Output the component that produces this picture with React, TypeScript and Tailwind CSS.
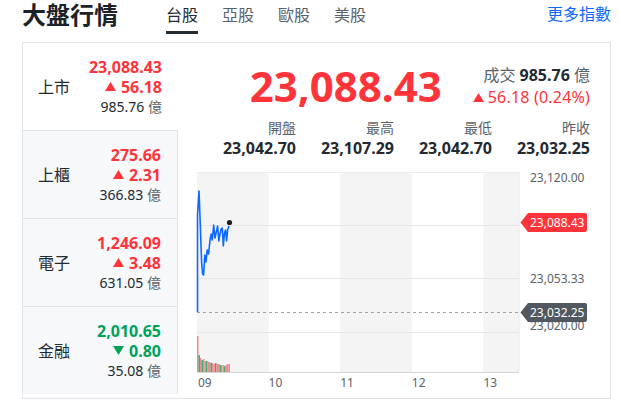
import React from "react";

const RED = "#ff333a";
const GREEN = "#00a25a";

function Tri({ up, color, size = 11 }: { up: boolean; color: string; size?: number }) {
  const h = Math.round(size * 0.82);
  return (
    <svg width={size} height={h} viewBox={`0 0 ${size} ${h}`} className="shrink-0">
      {up ? (
        <polygon points={`0,${h} ${size / 2},0 ${size},${h}`} fill={color} />
      ) : (
        <polygon points={`0,0 ${size},0 ${size / 2},${h}`} fill={color} />
      )}
    </svg>
  );
}

type Row = { name: string; price: string; change: string; vol: string; up: boolean };

const rows: Row[] = [
  { name: "上市", price: "23,088.43", change: "56.18", vol: "985.76", up: true },
  { name: "上櫃", price: "275.66", change: "2.31", vol: "366.83", up: true },
  { name: "電子", price: "1,246.09", change: "3.48", vol: "631.05", up: true },
  { name: "金融", price: "2,010.65", change: "0.80", vol: "35.08", up: false },
];

const linePts: [number, number][] = [
  [197.5, 312], [197.5, 215], [199, 191], [200.3, 225], [201.6, 262], [202.6, 274], [203.6, 275],
  [204.8, 255], [206, 262], [207.2, 250], [208.6, 254], [210, 240], [211.2, 234], [212.3, 240],
  [213.7, 225], [215, 238], [216.3, 232], [217.6, 226], [218.8, 241], [220, 234], [221.2, 229],
  [222.3, 228], [223.3, 246], [224.5, 233], [225.6, 230], [226.6, 241], [227.6, 230], [229, 226],
];

const bars: [number, number, boolean][] = [
  [197, 36, true], [198.5, 17, false], [200, 14, true], [201.5, 12, false], [203, 13, true],
  [204.5, 11, true], [206, 11, false], [207.5, 10, true], [209, 10, true], [210.5, 9, false],
  [212, 9, true], [213.5, 8, true], [215, 9, false], [216.5, 8, true], [218, 8, true],
  [219.5, 7, false], [221, 7, true], [222.5, 7, true], [224, 6, false], [225.5, 7, true],
  [227, 8, true], [228.5, 8, true],
];

function Chart() {
  const hw = 71.6;
  const x0 = 197;
  const font = "'Noto Sans', 'Noto Sans CJK TC', sans-serif";
  return (
    <svg width={432} height={224} viewBox="0 0 432 224" className="block">
      <g transform="translate(-178 -172)">
        <rect x={x0} y={172} width={hw} height={200} fill="#f4f4f4" />
        <rect x={x0 + hw * 2} y={172} width={hw} height={200} fill="#f4f4f4" />
        <rect x={x0 + hw * 4} y={172} width={519 - (x0 + hw * 4)} height={200} fill="#f4f4f4" />
        <line x1={x0} x2={519} y1={172.5} y2={172.5} stroke="#ececec" />
        {[225.5, 278.5, 332.5].map((y) => (
          <line key={y} x1={x0} x2={519} y1={y} y2={y} stroke="#e6e6e6" strokeWidth={1} />
        ))}
        <line x1={x0} x2={519} y1={372.5} y2={372.5} stroke="#d3d7dc" strokeWidth={1} />
        <line x1={519} x2={519} y1={172} y2={372} stroke="#e8e8e8" strokeWidth={1} />
        <line x1={x0} x2={520} y1={312.5} y2={312.5} stroke="#9ea3a8" strokeWidth={1} strokeDasharray="3 3" />
        {bars.map(([x, h, up], i) => (
          <rect key={i} x={x} y={372 - h} width={1.5} height={h} fill={up ? "#ef8a8f" : "#3fae72"} />
        ))}
        <polyline
          points={linePts.map((p) => p.join(",")).join(" ")}
          fill="none"
          stroke="#0f69ff"
          strokeWidth={1.6}
          strokeLinejoin="round"
        />
        <circle cx={229.5} cy={222.5} r={2.6} fill="#1d1d1f" />
        <text x={530} y={181.5} fontSize={12} fill="#5b636a" fontFamily={font}>23,120.00</text>
        <text x={530} y={282.5} fontSize={12} fill="#5b636a" fontFamily={font}>23,053.33</text>
        <text x={530} y={330} fontSize={12} fill="#5b636a" fontFamily={font}>23,020.00</text>
        <path d="M520.5,222.5 L528,213 L585,213 Q587,213 587,215 L587,230 Q587,232 585,232 L528,232 Z" fill={RED} />
        <text x={530} y={226.8} fontSize={12} fill="#ffffff" fontFamily={font}>23,088.43</text>
        <path d="M520.5,312.5 L528,303 L585,303 Q587,303 587,305 L587,320 Q587,322 585,322 L528,322 Z" fill="#51585f" />
        <text x={530} y={316.8} fontSize={12} fill="#ffffff" fontFamily={font}>23,032.25</text>
        {[["09", 198], ["10", 268.6], ["11", 340.2], ["12", 411.8], ["13", 483.4]].map(([t, x]) => (
          <text key={t as string} x={x as number} y={386.5} fontSize={12} fill="#5b636a" fontFamily={font}>
            {t}
          </text>
        ))}
      </g>
    </svg>
  );
}

export default function App() {
  return (
    <div className="w-[619px] h-[415px] bg-white overflow-hidden font-['Noto_Sans','Noto_Sans_CJK_TC',sans-serif] text-[#232a31]">
      <div className="flex h-[42px] items-start">
        <div className="pl-[22px] text-[24px] leading-[30px] font-bold text-[#1d2228]">大盤行情</div>
        <div className="ml-[48px] flex gap-[24px]">
          <div className="flex flex-col">
            <div className="mt-[5px] text-[16px] leading-[20px] text-[#232a31]">台股</div>
            <div className="mt-[6px] h-[3px] bg-[#232a31]" />
          </div>
          <div className="mt-[5px] text-[16px] leading-[20px] text-[#5b636a]">亞股</div>
          <div className="mt-[5px] text-[16px] leading-[20px] text-[#5b636a]">歐股</div>
          <div className="mt-[5px] text-[16px] leading-[20px] text-[#5b636a]">美股</div>
        </div>
        <div className="ml-auto mr-[8px] mt-[4px] text-[16px] leading-[20px] text-[#0f69ff]">更多指數</div>
      </div>

      <div className="ml-[22px] w-[589px] h-[357px] border border-[#e0e4e9] flex">
        <div className="w-[155px] flex flex-col">
          {rows.map((r, i) => {
            const c = r.up ? RED : GREEN;
            const active = i === 0;
            const last = i === rows.length - 1;
            return (
              <div
                key={r.name}
                className={`flex items-center justify-between pl-[15px] pr-[16px] ${
                  last ? "h-[87px]" : "h-[88px] border-b"
                } border-[#e0e4e9] ${active ? "bg-white" : "bg-[#f7f8fa] border-r"}`}
              >
                <div className="text-[16px] leading-[20px] text-[#232a31]">{r.name}</div>
                <div className="flex flex-col items-end">
                  <div className="text-[16px] leading-[20px] font-bold" style={{ color: c }}>
                    {r.price}
                  </div>
                  <div className="flex items-center gap-[5px] text-[16px] leading-[20px] font-bold" style={{ color: c }}>
                    <Tri up={r.up} color={c} size={11} />
                    <span>{r.change}</span>
                  </div>
                  <div className="text-[14px] leading-[20px] text-[#232a31]">
                    {r.vol}
                    <span className="text-[#5b636a]"> 億</span>
                  </div>
                </div>
              </div>
            );
          })}
        </div>

        <div className="flex-1 flex flex-col">
          <div className="mt-[21px] flex items-center justify-end pr-[20px] gap-[31px]">
            <div className="text-[42px] leading-[42px] font-bold text-[#ff333a]">23,088.43</div>
            <div className="flex flex-col items-end">
              <div className="text-[16px] leading-[22px] text-[#5b636a]">
                成交 <span className="font-bold text-[#232a31]">985.76</span> 億
              </div>
              <div className="flex items-center gap-[4px] text-[16px] leading-[22px] tracking-[0.2px] text-[#ff333a]">
                <Tri up color={RED} size={11} />
                <span>56.18 (0.24%)</span>
              </div>
            </div>
          </div>
          <div className="mt-[10px] px-[20px] grid grid-cols-4">
            {[
              ["開盤", "23,042.70"],
              ["最高", "23,107.29"],
              ["最低", "23,042.70"],
              ["昨收", "23,032.25"],
            ].map(([l, v]) => (
              <div key={l} className="flex flex-col items-end">
                <div className="text-[14px] leading-[20px] text-[#5b636a]">{l}</div>
                <div className="text-[16px] leading-[20px] font-bold text-[#232a31]">{v}</div>
              </div>
            ))}
          </div>
          <div className="mt-[14px]">
            <Chart />
          </div>
        </div>
      </div>
    </div>
  );
}
